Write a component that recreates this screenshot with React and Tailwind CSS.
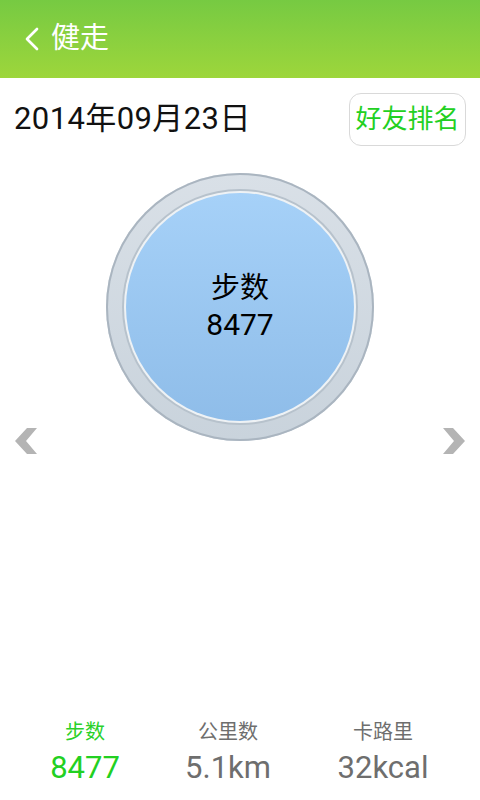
import { ChevronLeft } from "lucide-react";

const FONT = { fontFamily: "Roboto, 'Noto Sans CJK SC', sans-serif" };

function Arrow({ dir }) {
  return (
    <svg width="26" height="28" viewBox="0 0 26 28" aria-hidden>
      {dir === "left" ? (
        <polygon points="14,1 24,1 13,14 24,27 14,27 2,14" fill="#b4b4b4" />
      ) : (
        <polygon points="12,1 2,1 13,14 2,27 12,27 24,14" fill="#b4b4b4" />
      )}
    </svg>
  );
}

function Stat({ label, value, active }) {
  return (
    <div className="flex flex-col items-center">
      <span className={`text-[20px] leading-[24px] ${active ? "text-[#2ad12a]" : "text-[#6e6e6e]"}`}>{label}</span>
      <span className={`mt-[6px] text-[31px] leading-[36px] ${active ? "text-[#22d022]" : "text-[#6e6e6e]"}`}>{value}</span>
    </div>
  );
}

export default function App() {
  return (
    <div className="flex h-[800px] w-[480px] flex-col bg-white" style={FONT}>
      {/* 标题栏 */}
      <div className="flex h-[78px] items-center bg-gradient-to-b from-[#76ca42] to-[#9dd63b] pl-[12px]">
        <ChevronLeft className="h-[40px] w-[40px] text-white" strokeWidth={1.6} />
        <span className="ml-[-1px] text-[29px] text-white">健走</span>
      </div>

      <div className="flex items-center justify-between pl-[14px] pr-[14px] pt-[15px]">
        <span className="text-[31px] tracking-[0.4px] text-[#111]">2014年09月23日</span>
        <button
          type="button"
          className="flex h-[53px] w-[117px] items-center justify-center rounded-[12px] border border-[#d9d9d9] bg-white text-[26px] text-[#22d022]"
        >
          好友排名
        </button>
      </div>

      {/* 圆环 */}
      <div className="mt-[27px] flex justify-center">
        <div className="flex h-[268px] w-[268px] items-center justify-center rounded-full bg-gradient-to-b from-[#d9e0e7] to-[#c9d3dc] shadow-[inset_0_0_0_2px_#aab5c0]">
          <div className="flex h-[232px] w-[232px] items-center justify-center rounded-full bg-[#eef2f5] shadow-[0_0_0_2px_#b7c2cc]">
            <div className="flex h-[228px] w-[228px] flex-col items-center justify-center rounded-full bg-gradient-to-b from-[#a6d1f8] to-[#8fbde9]">
              <span className="text-[29px] leading-[36px] text-black">步数</span>
              <span className="text-[30px] leading-[38px] text-black">8477</span>
            </div>
          </div>
        </div>
      </div>

      <div className="mt-[-14px] flex justify-between px-[13px]">
        <Arrow dir="left" />
        <Arrow dir="right" />
      </div>

      <div className="mt-auto mb-[14px] grid grid-cols-[170px_116px_194px]">
        <Stat label="步数" value="8477" active />
        <Stat label="公里数" value="5.1km" />
        <Stat label="卡路里" value="32kcal" />
      </div>
    </div>
  );
}
